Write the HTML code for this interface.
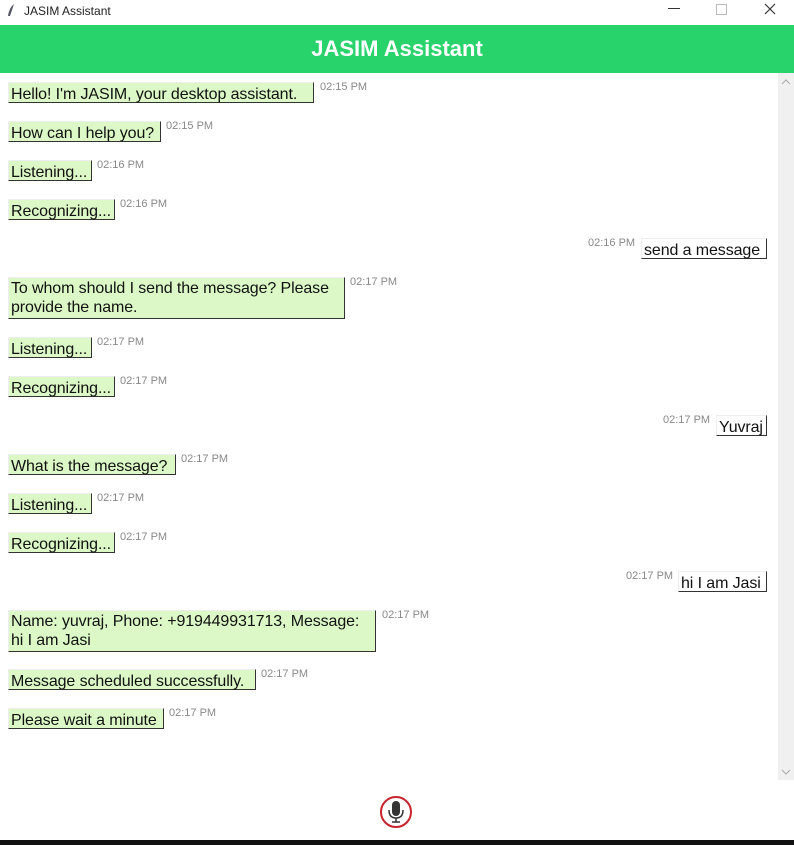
<!DOCTYPE html>
<html><head><meta charset="utf-8"><style>
*{margin:0;padding:0;box-sizing:border-box}
body{width:794px;height:845px;overflow:hidden;background:#fff;font-family:"Liberation Sans",Arial,sans-serif;position:relative}
.tb{position:absolute;left:0;top:0;width:794px;height:25px;background:#fff}
.tb .t{position:absolute;left:24px;top:4px;font-size:12px;color:#222}
.hdr{position:absolute;left:0;top:25px;width:794px;height:48px;background:#27d36a;color:#fff;font-weight:bold;font-size:22px;text-align:center;line-height:48px}
.sb{position:absolute;left:778px;top:73px;width:16px;height:707px;background:#f0f0f0}
.b{position:absolute;background:#dcf8c6;border-right:1px solid #333;border-bottom:1px solid #333;border-left:1px solid #eee;border-top:1px solid #eee;font-size:16px;line-height:19px;padding:2px 1px 0 2px;color:#111;white-space:nowrap;height:21px;letter-spacing:-0.1px}
.b.m{padding-top:1px}
.r{background:#fff}
.ts{position:absolute;font-size:11px;color:#888}
.bot{position:absolute;left:0;top:840px;width:794px;height:5px;background:#111}
</style></head><body>
<div class="tb"><svg style="position:absolute;left:6px;top:3px" width="10" height="15"><path d="M8 1 Q3 5 2 13 L4 13 Q6 7 8 1Z" fill="#556"/></svg><span class="t">JASIM Assistant</span>
<svg style="position:absolute;left:668px;top:8px" width="12" height="2"><rect width="12" height="1" fill="#333"/></svg>
<svg style="position:absolute;left:716px;top:4px" width="11" height="11"><rect x="0.5" y="0.5" width="10" height="10" fill="none" stroke="#bbb"/></svg>
<svg style="position:absolute;left:764px;top:3px" width="12" height="12"><path d="M1 1L11 11M11 1L1 11" stroke="#333" stroke-width="1.2"/></svg></div>
<div class="hdr">JASIM Assistant</div>
<div class="sb"><svg style="position:absolute;left:3px;top:6px" width="10" height="6"><path d="M1 5L5 1L9 5" stroke="#aaa" fill="none"/></svg><svg style="position:absolute;left:3px;top:696px" width="10" height="6"><path d="M1 1L5 5L9 1" stroke="#aaa" fill="none"/></svg></div>

<div class="b" style="left:8px;top:82px;width:306px">Hello! I'm JASIM, your desktop assistant.</div><div class="ts" style="left:320px;top:81px">02:15 PM</div>
<div class="b" style="left:8px;top:121px;width:153px">How can I help you?</div><div class="ts" style="left:166px;top:120px">02:15 PM</div>
<div class="b" style="left:8px;top:160px;width:84px">Listening...</div><div class="ts" style="left:97px;top:159px">02:16 PM</div>
<div class="b" style="left:8px;top:199px;width:107px">Recognizing...</div><div class="ts" style="left:120px;top:198px">02:16 PM</div>
<div class="b r" style="left:641px;top:238px;width:126px">send a message</div><div class="ts" style="left:588px;top:237px">02:16 PM</div>
<div class="b m" style="left:8px;top:277px;width:337px;height:42px;white-space:normal">To whom should I send the message? Please provide the name.</div><div class="ts" style="left:350px;top:276px">02:17 PM</div>
<div class="b" style="left:8px;top:337px;width:84px">Listening...</div><div class="ts" style="left:97px;top:336px">02:17 PM</div>
<div class="b" style="left:8px;top:376px;width:107px">Recognizing...</div><div class="ts" style="left:120px;top:375px">02:17 PM</div>
<div class="b r" style="left:716px;top:415px;width:51px">Yuvraj</div><div class="ts" style="left:663px;top:414px">02:17 PM</div>
<div class="b" style="left:8px;top:454px;width:168px">What is the message?</div><div class="ts" style="left:181px;top:453px">02:17 PM</div>
<div class="b" style="left:8px;top:493px;width:84px">Listening...</div><div class="ts" style="left:97px;top:492px">02:17 PM</div>
<div class="b" style="left:8px;top:532px;width:107px">Recognizing...</div><div class="ts" style="left:120px;top:531px">02:17 PM</div>
<div class="b r" style="left:678px;top:571px;width:89px">hi I am Jasi</div><div class="ts" style="left:626px;top:570px">02:17 PM</div>
<div class="b m" style="left:8px;top:610px;width:368px;height:42px;white-space:normal">Name: yuvraj, Phone: +919449931713, Message: hi I am Jasi</div><div class="ts" style="left:382px;top:609px">02:17 PM</div>
<div class="b" style="left:8px;top:669px;width:248px">Message scheduled successfully.</div><div class="ts" style="left:261px;top:668px">02:17 PM</div>
<div class="b" style="left:8px;top:708px;width:156px">Please wait a minute</div><div class="ts" style="left:169px;top:707px">02:17 PM</div>

<svg style="position:absolute;left:379px;top:796px" width="34" height="32" viewBox="0 0 34 32">
<circle cx="17" cy="16" r="15" fill="#fff" stroke="#c8232c" stroke-width="2"/>
<rect x="13" y="5" width="8" height="15" rx="4" fill="#333"/>
<path d="M10 14 Q10 22 17 22 Q24 22 24 14" fill="none" stroke="#333" stroke-width="1.5"/>
<path d="M17 22V26M13 26H21" stroke="#333" stroke-width="1.5"/>
</svg>
<div class="bot"></div>
</body></html>
